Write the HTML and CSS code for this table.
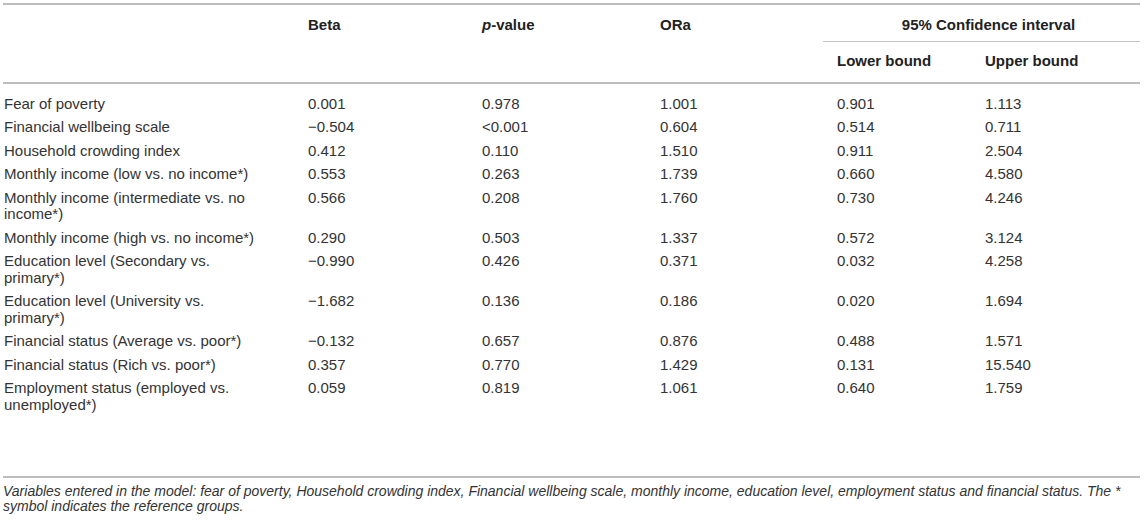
FILE: index.html
```html
<!DOCTYPE html>
<html>
<head>
<meta charset="utf-8">
<link rel="stylesheet" href="styles.css">
</head>
<body>
<div class="wrap">
<table class="tbl">
  <colgroup>
    <col class="c1"><col class="c2"><col class="c3"><col class="c4"><col class="c5"><col class="c6">
  </colgroup>
  <thead>
    <tr class="h1">
      <th rowspan="2" class="lab"></th>
      <th rowspan="2">Beta</th>
      <th rowspan="2"><i>p</i>-value</th>
      <th rowspan="2">ORa</th>
      <th colspan="2" class="ci">95% Confidence interval</th>
    </tr>
    <tr class="h2">
      <th>Lower bound</th>
      <th>Upper bound</th>
    </tr>
  </thead>
  <tbody>
    <tr class="first"><td class="lab">Fear of poverty</td><td>0.001</td><td>0.978</td><td>1.001</td><td>0.901</td><td>1.113</td></tr>
    <tr><td class="lab">Financial wellbeing scale</td><td>&minus;0.504</td><td>&lt;0.001</td><td>0.604</td><td>0.514</td><td>0.711</td></tr>
    <tr><td class="lab">Household crowding index</td><td>0.412</td><td>0.110</td><td>1.510</td><td>0.911</td><td>2.504</td></tr>
    <tr><td class="lab">Monthly income (low vs. no income*)</td><td>0.553</td><td>0.263</td><td>1.739</td><td>0.660</td><td>4.580</td></tr>
    <tr><td class="lab">Monthly income (intermediate vs. no income*)</td><td>0.566</td><td>0.208</td><td>1.760</td><td>0.730</td><td>4.246</td></tr>
    <tr><td class="lab">Monthly income (high vs. no income*)</td><td>0.290</td><td>0.503</td><td>1.337</td><td>0.572</td><td>3.124</td></tr>
    <tr><td class="lab">Education level (Secondary vs. primary*)</td><td>&minus;0.990</td><td>0.426</td><td>0.371</td><td>0.032</td><td>4.258</td></tr>
    <tr><td class="lab">Education level (University vs. primary*)</td><td>&minus;1.682</td><td>0.136</td><td>0.186</td><td>0.020</td><td>1.694</td></tr>
    <tr><td class="lab">Financial status (Average vs. poor*)</td><td>&minus;0.132</td><td>0.657</td><td>0.876</td><td>0.488</td><td>1.571</td></tr>
    <tr><td class="lab">Financial status (Rich vs. poor*)</td><td>0.357</td><td>0.770</td><td>1.429</td><td>0.131</td><td>15.540</td></tr>
    <tr class="last"><td class="lab">Employment status (employed vs. unemployed*)</td><td>0.059</td><td>0.819</td><td>1.061</td><td>0.640</td><td>1.759</td></tr>
  </tbody>
</table>
<p class="note">Variables entered in the model: fear of poverty, Household crowding index, Financial wellbeing scale, monthly income, education level, employment status and financial status. The * symbol indicates the reference groups.</p>
</div>
</body>
</html>
```
FILE: styles.css
```css
html, body {
  margin: 0;
  padding: 0;
  background: #ffffff;
}
body {
  font-family: "Liberation Sans", Arial, sans-serif;
  color: #333333;
}
.wrap {
  padding: 3px 5px 0 3px;
}
.tbl {
  width: 1137px;
  table-layout: fixed;
  border-collapse: separate;
  border-spacing: 0;
  font-size: 15px;
  line-height: 16.5px;
  border-top: 2px solid #bdbdbd;
  border-bottom: 2px solid #bdbdbd;
}
.c1 { width: 291px; }
.c2 { width: 174px; }
.c3 { width: 178px; }
.c4 { width: 177px; }
.c5 { width: 148px; }
.c6 { width: 169px; }

th, td {
  text-align: left;
  vertical-align: top;
  padding: 3.5px 8px 3.5px 14px;
}
th {
  font-weight: bold;
  color: #222222;
}
th i {
  font-style: italic;
}
th.lab, td.lab {
  padding-left: 1px;
  padding-right: 28px;
}
.h1 th {
  padding-top: 12px;
  padding-bottom: 7px;
}
.h1 th.ci {
  text-align: center;
  border-bottom: 1px solid #c4c4c4;
  padding-left: 14px;
  padding-right: 0;
}
.h2 th {
  padding-top: 11px;
  padding-bottom: 12.5px;
}
thead tr.h1 th[rowspan] {
  border-bottom: 2px solid #bdbdbd;
}
.h2 th {
  border-bottom: 2px solid #bdbdbd;
}
tr.first td {
  padding-top: 12px;
}
tr.last td {
  padding-bottom: 63px;
}
.note {
  margin: 6px 0 0 0;
  width: 1137px;
  font-size: 14px;
  line-height: 15px;
  font-style: italic;
  color: #333333;
}
```
